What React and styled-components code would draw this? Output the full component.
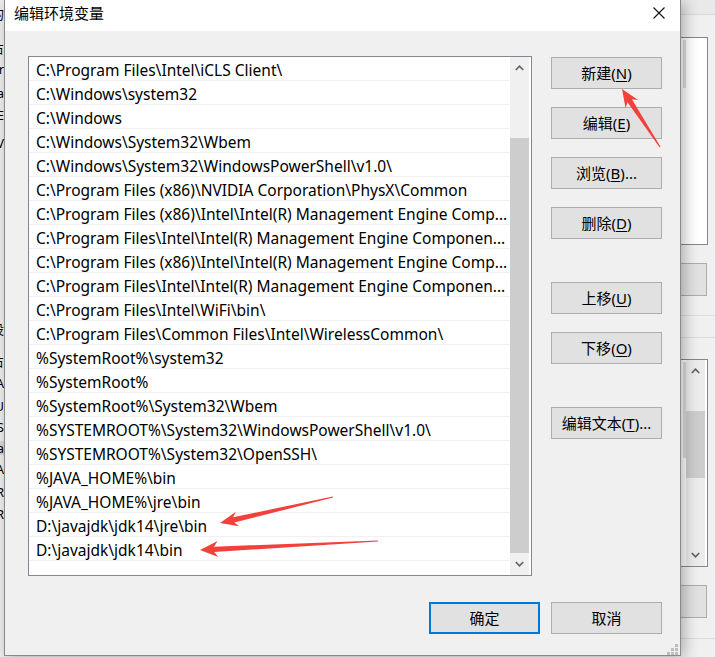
import styled, { createGlobalStyle } from 'styled-components'

const entries = [
  'C:\\Program Files\\Intel\\iCLS Client\\',
  'C:\\Windows\\system32',
  'C:\\Windows',
  'C:\\Windows\\System32\\Wbem',
  'C:\\Windows\\System32\\WindowsPowerShell\\v1.0\\',
  'C:\\Program Files (x86)\\NVIDIA Corporation\\PhysX\\Common',
  'C:\\Program Files (x86)\\Intel\\Intel(R) Management Engine Comp...',
  'C:\\Program Files\\Intel\\Intel(R) Management Engine Componen...',
  'C:\\Program Files (x86)\\Intel\\Intel(R) Management Engine Comp...',
  'C:\\Program Files\\Intel\\Intel(R) Management Engine Componen...',
  'C:\\Program Files\\Intel\\WiFi\\bin\\',
  'C:\\Program Files\\Common Files\\Intel\\WirelessCommon\\',
  '%SystemRoot%\\system32',
  '%SystemRoot%',
  '%SystemRoot%\\System32\\Wbem',
  '%SYSTEMROOT%\\System32\\WindowsPowerShell\\v1.0\\',
  '%SYSTEMROOT%\\System32\\OpenSSH\\',
  '%JAVA_HOME%\\bin',
  '%JAVA_HOME%\\jre\\bin',
  'D:\\javajdk\\jdk14\\jre\\bin',
  'D:\\javajdk\\jdk14\\bin',
]

// side buttons: label, mnemonic, suffix, space above
const sideButtons = [
  { label: '新建', key: 'N', tail: '', space: 0 },
  { label: '编辑', key: 'E', tail: '', space: 18 },
  { label: '浏览', key: 'B', tail: '...', space: 18 },
  { label: '删除', key: 'D', tail: '', space: 18 },
  { label: '上移', key: 'U', tail: '', space: 43 },
  { label: '下移', key: 'O', tail: '', space: 18 },
  { label: '编辑文本', key: 'T', tail: '...', space: 43 },
]

// bits of the window behind, peeking out on the left
const leftBits = [
  { text: '的', top: 7 },
  { text: '占', top: 20 },
  { text: 'r', top: 7 },
  { text: 'a', top: 10 },
  { text: 'E', top: 8 },
  { text: 'V', top: 14 },
  { text: '设', top: 172 },
  { text: '占', top: 18 },
  { text: 'A', top: 8 },
  { text: 'U', top: 9 },
  { text: 'S', top: 7 },
  { text: 'a', top: 7, hl: true },
  { text: 'A', top: 7 },
  { text: 'R', top: 9 },
  { text: 'R', top: 8 },
]

const arrows = [
  { tail: [660, 147], tip: [622, 89], len: 18, half: 7.5 },
  { tail: [333, 497], tip: [220, 523], len: 18, half: 7.5 },
  { tail: [378, 541], tip: [200, 550], len: 18, half: 8 },
]

function arrowPoints({ tail, tip, len, half }) {
  const dx = tip[0] - tail[0]
  const dy = tip[1] - tail[1]
  const d = Math.hypot(dx, dy)
  const ux = dx / d
  const uy = dy / d
  const nx = -uy
  const ny = ux
  const at = (along, side) => {
    const x = tip[0] - ux * along + nx * side
    const y = tip[1] - uy * along + ny * side
    return `${x.toFixed(1)},${y.toFixed(1)}`
  }
  return [
    at(d, 0.6),
    at(len * 0.78, 2.6),
    at(len, half),
    at(0, 0),
    at(len, -half),
    at(len * 0.78, -2.6),
    at(d, -0.6),
  ].join(' ')
}

const GlobalStyle = createGlobalStyle`
  html, body {
    margin: 0;
    padding: 0;
  }
  body {
    background: #f0f0f0;
    font-family: "Noto Sans", "Noto Sans CJK SC", sans-serif;
    font-size: 15px;
    color: #000;
  }
`

const Screen = styled.div`
  position: relative;
  display: flex;
  width: 715px;
  height: 657px;
  overflow: hidden;
  background: #f0f0f0;
`

const BackLeft = styled.div`
  flex: none;
  width: 4px;
  display: flex;
  flex-direction: column;
  align-items: flex-end;
  overflow: hidden;
  background: #f0f0f0;
`

const Bit = styled.div`
  margin-top: ${p => p.$top}px;
  line-height: 14px;
  font-size: 13px;
  white-space: nowrap;
  background: ${p => (p.$hl ? '#d9d9d9' : 'transparent')};
`

const Dialog = styled.div`
  position: relative;
  z-index: 1;
  flex: none;
  width: 677px;
  height: 656px;
  box-sizing: border-box;
  display: flex;
  flex-direction: column;
  border: 1px solid #8a8a8a;
  border-top: none;
  background: #f0f0f0;
  box-shadow: 3px 2px 14px rgba(0, 0, 0, 0.3);
`

const TitleBar = styled.div`
  flex: none;
  height: 31px;
  display: flex;
  justify-content: space-between;
  align-items: flex-start;
  background: #fff;
`

const Title = styled.div`
  padding-left: 9px;
  line-height: 26px;
  font-family: "Noto Sans CJK SC", sans-serif;
  font-size: 15px;
`

const Close = styled.svg`
  margin: 7px 15px 0 0;
`

const Body = styled.div`
  flex: 1;
  display: grid;
  grid-template-columns: 504px 111px;
  grid-template-rows: 520px 32px;
  column-gap: 19px;
  row-gap: 26px;
  align-content: start;
  padding: 25px 0 0 23px;
`

const ListBox = styled.div`
  box-sizing: border-box;
  height: 520px;
  display: flex;
  border: 1px solid #828790;
  background: #fff;
`

const Rows = styled.div`
  flex: 1;
  min-width: 0;
  display: flex;
  flex-direction: column;
`

const Row = styled.div`
  box-sizing: border-box;
  height: 24px;
  padding: 3px 0 0 7px;
  line-height: 20px;
  font-size: 15.5px;
  border-bottom: 1px solid #f0f0f0;
  white-space: nowrap;
  overflow: hidden;
`

const ScrollBar = styled.div`
  flex: none;
  width: ${p => p.$w}px;
  margin-right: 2px;
  margin-left: ${p => (p.$push ? 'auto' : '0')};
  display: flex;
  flex-direction: column;
  background: ${p => p.$bg || '#f0f0f0'};
`

const ScrollArrow = styled.div`
  flex: none;
  height: ${p => p.$h}px;
  display: flex;
  align-items: center;
  justify-content: center;
`

const Track = styled.div`
  flex: 1;
  padding-top: ${p => p.$offset}px;
`

const Thumb = styled.div`
  height: ${p => p.$size}px;
  background: #cdcdcd;
`

const ButtonCol = styled.div`
  display: flex;
  flex-direction: column;
  padding-top: 1px;
`

const Button = styled.button`
  box-sizing: border-box;
  width: 111px;
  height: 32px;
  margin: ${p => p.$space || 0}px 0 0;
  padding: 0;
  border: ${p => (p.$primary ? '2px solid #0078d7' : '1px solid #adadad')};
  background: #e1e1e1;
  color: #000;
  font-family: "Noto Sans", "Noto Sans CJK SC", sans-serif;
  font-size: 15px;
  line-height: 20px;

  u {
    text-underline-offset: 2px;
  }
`

const Footer = styled.div`
  grid-column: 1 / -1;
  display: flex;
  justify-content: flex-end;
  gap: 11px;
`

const Grip = styled.svg`
  position: absolute;
  right: 2px;
  bottom: 0;
`

const BackRight = styled.div`
  flex: 1;
  display: flex;
  flex-direction: column;
  background: #f0f0f0;
`

const TopBand = styled.div`
  height: 14px;
  background: #e9e9e9;
  border-bottom: 1px solid #d9d9d9;
`

const BgList = styled.div`
  box-sizing: border-box;
  width: 27px;
  height: 208px;
  margin-top: ${p => p.$top}px;
  display: flex;
  border: 1px solid #828790;
  border-left: none;
  background: #fff;
`

const ThinBar = styled.div`
  width: 3px;
  height: ${p => p.$h}px;
  margin: 2px 0 0 2px;
  background: #dcdcdc;
`

const BgButton = styled.div`
  box-sizing: border-box;
  width: 26px;
  height: 33px;
  margin-top: ${p => p.$top}px;
  background: #e1e1e1;
  border: 1px solid #adadad;
  border-left: none;
`

const Rule = styled.div`
  margin-top: ${p => p.$top}px;
  height: 1px;
  background: #dcdcdc;
`

const Overlay = styled.svg`
  position: absolute;
  left: 0;
  top: 0;
  pointer-events: none;
  z-index: 2;
`

function Chevron({ down }) {
  return (
    <svg width="9" height="6" viewBox="0 0 9 6">
      <polyline
        points={down ? '0.8,1 4.5,4.8 8.2,1' : '0.8,5 4.5,1.2 8.2,5'}
        fill="none"
        stroke="#606060"
        strokeWidth="1.6"
      />
    </svg>
  )
}

export default function App() {
  return (
    <>
      <GlobalStyle />
      <Screen>
        <BackLeft>
          {leftBits.map((b, i) => (
            <Bit key={i} $top={b.top} $hl={b.hl}>{b.text}</Bit>
          ))}
        </BackLeft>

        <Dialog>
          <TitleBar>
            <Title>编辑环境变量</Title>
            <Close width="12" height="12" viewBox="0 0 12 12">
              <path d="M0.5 0.5 L11.5 11.5 M11.5 0.5 L0.5 11.5" stroke="#111" strokeWidth="1.1" />
            </Close>
          </TitleBar>

          <Body>
            <ListBox>
              <Rows>
                {entries.map((e, i) => (
                  <Row key={i}>{e}</Row>
                ))}
              </Rows>
              <ScrollBar $w={19}>
                <ScrollArrow $h={21}><Chevron /></ScrollArrow>
                <Track $offset={60}>
                  <Thumb $size={415} />
                </Track>
                <ScrollArrow $h={22}><Chevron down /></ScrollArrow>
              </ScrollBar>
            </ListBox>

            <ButtonCol>
              {sideButtons.map(b => (
                <Button key={b.key} $space={b.space}>
                  {b.label}(<u>{b.key}</u>){b.tail}
                </Button>
              ))}
            </ButtonCol>

            <Footer>
              <Button $primary>确定</Button>
              <Button>取消</Button>
            </Footer>
          </Body>

          <Grip width="11" height="11" viewBox="0 0 11 11">
            <rect x="8" y="0" width="3" height="3" fill="#bdbdbd" />
            <rect x="4" y="4" width="3" height="3" fill="#bdbdbd" />
            <rect x="8" y="4" width="3" height="3" fill="#bdbdbd" />
            <rect x="0" y="8" width="3" height="3" fill="#bdbdbd" />
            <rect x="4" y="8" width="3" height="3" fill="#bdbdbd" />
            <rect x="8" y="8" width="3" height="3" fill="#bdbdbd" />
          </Grip>
        </Dialog>

        <BackRight>
          <TopBand />
          <BgList $top={22}>
            <ThinBar $h={48} />
          </BgList>
          <BgButton $top={18} />
          <Rule $top={19} />
          <Rule $top={21} />
          <BgList $top={21}>
            <ThinBar $h={96} />
            <ScrollBar $w={19} $bg="#ececec" $push>
              <ScrollArrow $h={21}><Chevron /></ScrollArrow>
              <Track $offset={30}>
                <Thumb $size={67} />
              </Track>
              <ScrollArrow $h={22}><Chevron down /></ScrollArrow>
            </ScrollBar>
          </BgList>
          <BgButton $top={18} />
          <Rule $top={20} />
        </BackRight>

        <Overlay width="715" height="657" viewBox="0 0 715 657">
          {arrows.map((a, i) => (
            <polygon key={i} points={arrowPoints(a)} fill="#f2403b" />
          ))}
        </Overlay>
      </Screen>
    </>
  )
}
